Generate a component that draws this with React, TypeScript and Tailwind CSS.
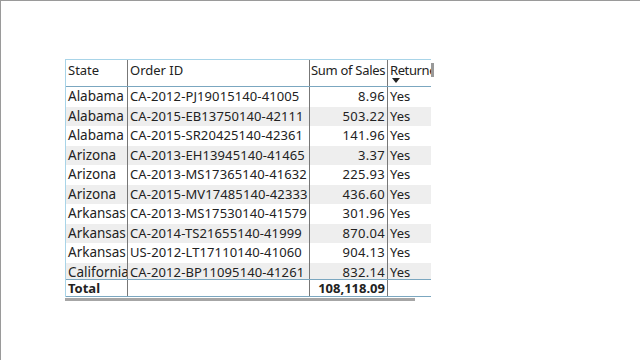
import React from "react"

interface Row {
    state: string
    orderId: string
    sales: string
    returned: string
}

const rows: Row[] = [
    { state: "Alabama", orderId: "CA-2012-PJ19015140-41005", sales: "8.96", returned: "Yes" },
    { state: "Alabama", orderId: "CA-2015-EB13750140-42111", sales: "503.22", returned: "Yes" },
    { state: "Alabama", orderId: "CA-2015-SR20425140-42361", sales: "141.96", returned: "Yes" },
    { state: "Arizona", orderId: "CA-2013-EH13945140-41465", sales: "3.37", returned: "Yes" },
    { state: "Arizona", orderId: "CA-2013-MS17365140-41632", sales: "225.93", returned: "Yes" },
    { state: "Arizona", orderId: "CA-2015-MV17485140-42333", sales: "436.60", returned: "Yes" },
    { state: "Arkansas", orderId: "CA-2013-MS17530140-41579", sales: "301.96", returned: "Yes" },
    { state: "Arkansas", orderId: "CA-2014-TS21655140-41999", sales: "870.04", returned: "Yes" },
    { state: "Arkansas", orderId: "US-2012-LT17110140-41060", sales: "904.13", returned: "Yes" },
    { state: "California", orderId: "CA-2012-BP11095140-41261", sales: "832.14", returned: "Yes" },
]

export default function App() {
    return (
        <div className="w-[640px] h-[360px] bg-white border-t border-l border-[#9a9a9a] overflow-hidden font-['Noto_Sans',sans-serif] text-[13px] text-[#222]">
            <div className="ml-[64px] mt-[58px] w-[370px] relative">
                {/* grid */}
                <div className="w-[366px] overflow-hidden border-l border-t border-[#a8d4e8]">
                    {/* header */}
                    <div className="flex h-[27px] border-b border-[#7ba7c0] leading-[20px] whitespace-nowrap">
                        <div className="w-[62px] shrink-0 px-[2px] border-r border-[#777]">State</div>
                        <div className="w-[182px] shrink-0 px-[2px] border-r border-[#777]">Order ID</div>
                        <div className="w-[78px] shrink-0 pl-[1px] border-r border-[#777] overflow-hidden tracking-[-0.3px]">Sum of Sales</div>
                        <div className="w-[60px] shrink-0 px-[2px] relative tracking-[-0.4px]">
                            Returned
                            <svg className="absolute left-[4px] top-[18px]" width="8" height="5" viewBox="0 0 8 5">
                                <path d="M0 0 L8 0 L4 5 Z" fill="#222" />
                            </svg>
                        </div>
                    </div>
                    {/* body */}
                    <div className="h-[192px] overflow-hidden">
                        {rows.map((r, i) => (
                            <div key={i} className={`flex h-[19.5px] leading-[19px] whitespace-nowrap ${i % 2 === 1 ? "bg-[#eeeeee]" : "bg-white"}`}>
                                <div className="w-[62px] shrink-0 px-[2px] border-r border-[#777] overflow-hidden text-[13.5px]">{r.state}</div>
                                <div className="w-[182px] shrink-0 px-[2px] border-r border-[#777] overflow-hidden tracking-[0.1px]">{r.orderId}</div>
                                <div className="w-[78px] shrink-0 px-[2px] border-r border-[#777] text-right tracking-[0.3px]">{r.sales}</div>
                                <div className="w-[60px] shrink-0 px-[2px]">{r.returned}</div>
                            </div>
                        ))}
                    </div>
                    {/* total */}
                    <div className="flex h-[18px] border-t border-b border-[#7ba7c0] leading-[16px] font-bold whitespace-nowrap">
                        <div className="w-[62px] shrink-0 px-[2px] border-r border-[#777]">Total</div>
                        <div className="w-[182px] shrink-0 px-[2px] border-r border-[#777]"></div>
                        <div className="w-[78px] shrink-0 px-[2px] border-r border-[#777] text-right">108,118.09</div>
                        <div className="w-[60px] shrink-0 px-[2px]"></div>
                    </div>
                </div>
                {/* vertical scrollbar thumb */}
                <div className="absolute left-[366px] top-[4px] w-[3px] h-[14px] bg-[#999]"></div>
                {/* horizontal scrollbar */}
                <div className="mt-[1px] w-[350px] h-[3px] bg-[#a6a6a6]"></div>
            </div>
        </div>
    )
}
